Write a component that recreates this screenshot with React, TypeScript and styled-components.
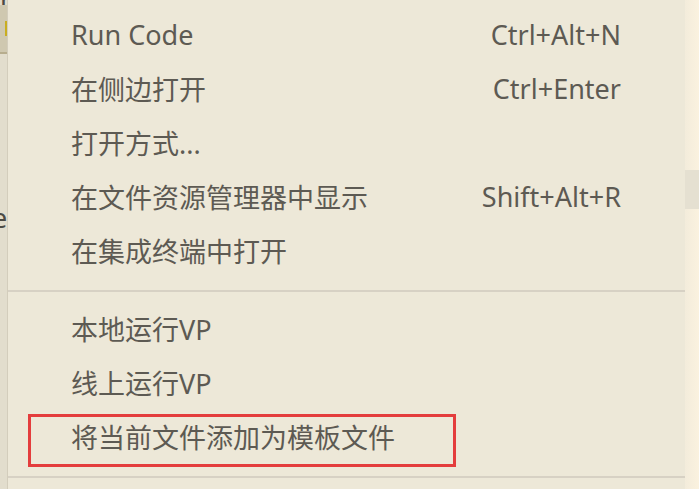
import React from "react";
import styled, { createGlobalStyle } from "styled-components";

const Global = createGlobalStyle`
  html, body { margin: 0; padding: 0; }
  body {
    width: 699px;
    height: 489px;
    overflow: hidden;
    background: #ede8d8;
    font-family: "Noto Sans", "Noto Sans CJK SC", sans-serif;
  }
`;

const Screen = styled.div`
  display: flex;
  width: 699px;
  height: 489px;
  overflow: hidden;
`;

const EditorStrip = styled.div`
  position: relative;
  width: 7px;
  flex: none;
  background: #e2ddcd;
  border-right: 1px solid #d3cdbc;
  display: flex;
  flex-direction: column;
  overflow: hidden;
  font-size: 27px;
  color: #4c4a44;
`;

const StripTop = styled.div`
  height: 13px;
  line-height: 13px;
  margin-top: -8px;
`;

const StripTab = styled.div`
  height: 47px;
  background: #cfc8b0;
  border-bottom: 2px solid #b7ad8e;
  display: flex;
  align-items: center;
  justify-content: flex-end;
`;

const StripMark = styled.div`
  width: 2px;
  height: 15px;
  background: #c9ae21;
`;

const StripText = styled.div`
  margin-top: 152px;
  line-height: 24px;
  margin-left: -8px;
`;

const MenuWrap = styled.div`
  flex: 1;
  display: flex;
`;

const Menu = styled.div`
  flex: 1;
  display: flex;
  flex-direction: column;
  padding-top: 9px;
  background: #ede8d8;
`;

const Row = styled.div<{ $boxed?: boolean }>`
  position: relative;
  box-sizing: border-box;
  height: 54px;
  display: flex;
  align-items: center;
  justify-content: space-between;
  padding: 0 64px 4px 63px;
  font-size: 27px;
  color: #5d5a53;
  ${(p) =>
    p.$boxed &&
    `
    &::after {
      content: "";
      position: absolute;
      left: 20px;
      top: 3px;
      width: 422px;
      height: 47px;
      border: 3px solid #e43d3d;
    }
  `}
`;

const Label = styled.span`
  white-space: nowrap;
`;

const Shortcut = styled.span`
  color: #5d5a53;
  white-space: nowrap;
`;

const Separator = styled.div`
  height: 2px;
  margin: 11px 0;
  width: 677px;
  background: #d7d1c4;
`;

const Gutter = styled.div`
  position: relative;
  width: 15px;
  flex: none;
  background: linear-gradient(90deg, #f3ecdb, #fbf2df);
`;

const Thumb = styled.div`
  position: absolute;
  top: 170px;
  left: 0;
  width: 15px;
  height: 39px;
  background: #e5e0d1;
`;

type Item = { label: string; key?: string; boxed?: boolean };

const groupA: Item[] = [
  { label: "Run Code", key: "Ctrl+Alt+N" },
  { label: "在侧边打开", key: "Ctrl+Enter" },
  { label: "打开方式..." },
  { label: "在文件资源管理器中显示", key: "Shift+Alt+R" },
  { label: "在集成终端中打开" },
];

const groupB: Item[] = [
  { label: "本地运行VP" },
  { label: "线上运行VP" },
  { label: "将当前文件添加为模板文件", boxed: true },
];

export default function App() {
  return (
    <Screen>
      <Global />
      <EditorStrip>
        <StripTop>r</StripTop>
        <StripTab>
          <StripMark />
        </StripTab>
        <StripText>e</StripText>
      </EditorStrip>
      <MenuWrap>
        <Menu>
          {groupA.map((it) => (
            <Row key={it.label}>
              <Label>{it.label}</Label>
              {it.key && <Shortcut>{it.key}</Shortcut>}
            </Row>
          ))}
          <Separator />
          {groupB.map((it) => (
            <Row key={it.label} $boxed={it.boxed}>
              <Label>{it.label}</Label>
            </Row>
          ))}
          <Separator />
        </Menu>
        <Gutter>
          <Thumb />
        </Gutter>
      </MenuWrap>
    </Screen>
  );
}
